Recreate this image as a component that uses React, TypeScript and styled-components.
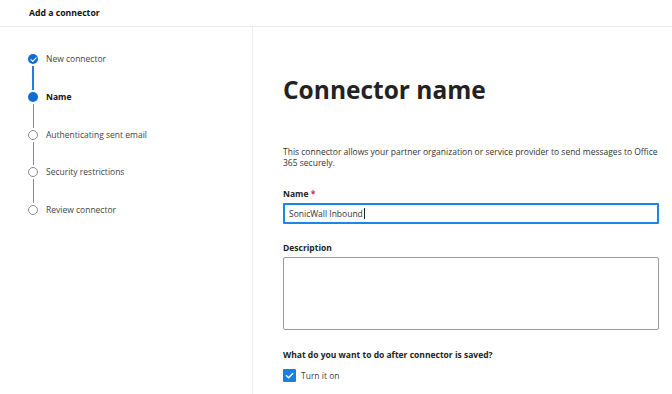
import * as React from 'react';
import styled, { createGlobalStyle } from 'styled-components';

const GlobalStyle = createGlobalStyle`
  html, body { margin:0; padding:0; background:#ffffff; }
  body { font-family: "Open Sans", "Noto Sans", sans-serif; color:#222; }
`;

const Page = styled.div`
  width:672px; height:394px;
  display:flex; flex-direction:column;
  overflow:hidden;
`;

const TopBar = styled.header`
  height:26px;
  flex-shrink:0;
  border-bottom:1px solid #ebebeb;
  padding-left:29px;
  display:flex; align-items:center;
  font-size:8.7px; font-weight:700; color:#111;
`;

const Body = styled.div`
  flex:1;
  display:flex;
`;

const Sidebar = styled.nav`
  width:253px;
  flex-shrink:0;
  border-right:1px solid #ededed;
  padding:27px 0 0 28px;
  box-sizing:border-box;
`;

const StepRow = styled.div`
  display:flex;
  height:37.8px;
  gap:8px;
  &:last-child { height:12px; }
`;

const Marker = styled.div`
  width:10px;
  display:flex; flex-direction:column; align-items:center;
`;

const Dot = styled.div<{ state: 'done' | 'current' | 'todo' }>`
  width:10px; height:10px;
  box-sizing:border-box;
  border-radius:50%;
  flex-shrink:0;
  display:flex; align-items:center; justify-content:center;
  background:${(p) => (p.state === 'todo' ? '#fff' : '#0f6cd4')};
  border:${(p) => (p.state === 'todo' ? '1px solid #8a8a8a' : 'none')};
`;

const Line = styled.div<{ active?: boolean }>`
  width:${(p) => (p.active ? '2px' : '1px')};
  flex:1;
  margin:2px 0;
  background:${(p) => (p.active ? '#1a7fe0' : '#8a8a8a')};
`;

const StepLabel = styled.span<{ current?: boolean }>`
  font-size:8.5px;
  line-height:10px;
  color:${(p) => (p.current ? '#111' : '#444')};
  font-weight:${(p) => (p.current ? 700 : 400)};
`;

const Main = styled.main`
  flex:1;
  padding:48px 13px 0 30px;
  box-sizing:border-box;
`;

const Title = styled.h1`
  margin:0;
  font-size:24.5px;
  line-height:30px;
  font-weight:700;
  color:#222;
`;

const Intro = styled.p`
  margin:41px 0 0 0;
  font-size:8.5px;
  line-height:11px;
  color:#333;
`;

const FieldLabel = styled.div<{ gap: number }>`
  margin-top:${(p) => p.gap}px;
  font-size:8.5px;
  font-weight:700;
  color:#222;
  line-height:12px;
  span { color:#c4314b; }
`;

const TextBox = styled.div`
  margin-top:3px;
  height:21px;
  box-sizing:border-box;
  border:2px solid #1a86e8;
  border-radius:1px;
  padding-left:4px;
  display:flex; align-items:center;
  font-size:8.5px;
  color:#333;
  &::after {
    content:'';
    width:1px; height:11px;
    background:#222;
    margin-left:1px;
  }
`;

const TextArea = styled.div`
  margin-top:3px;
  height:73px;
  box-sizing:border-box;
  border:1px solid #9b9b9b;
  border-radius:2px;
`;

const Question = styled.div`
  margin-top:19px;
  font-size:8.5px;
  font-weight:700;
  color:#222;
  line-height:12px;
`;

const CheckRow = styled.label`
  margin-top:8px;
  display:flex; align-items:center; gap:5px;
  font-size:8.5px;
  color:#444;
`;

const CheckBox = styled.span`
  width:13px; height:13px;
  border-radius:1px;
  background:#1a7fe0;
  display:flex; align-items:center; justify-content:center;
`;

const Check = ({ size }: { size: number }) => (
  <svg width={size} height={size} viewBox="0 0 10 10">
    <path d="M2.2 5.2 L4.2 7.1 L7.9 3.2" fill="none" stroke="#fff" strokeWidth="1.3" strokeLinecap="round" strokeLinejoin="round" />
  </svg>
);

const steps: { title: string; state: 'done' | 'current' | 'todo' }[] = [
  { title: 'New connector', state: 'done' },
  { title: 'Name', state: 'current' },
  { title: 'Authenticating sent email', state: 'todo' },
  { title: 'Security restrictions', state: 'todo' },
  { title: 'Review connector', state: 'todo' },
];

const App = () => {
  return (
    <Page>
      <GlobalStyle />
      <TopBar>Add a connector</TopBar>
      <Body>
        <Sidebar>
          {steps.map((item, i) => (
            <StepRow key={item.title}>
              <Marker>
                <Dot state={item.state}>{item.state === 'done' && <Check size={9} />}</Dot>
                {i < steps.length - 1 && <Line active={item.state === 'done'} />}
              </Marker>
              <StepLabel current={item.state === 'current'}>{item.title}</StepLabel>
            </StepRow>
          ))}
        </Sidebar>
        <Main>
          <Title>Connector name</Title>
          <Intro>
            This connector allows your partner organization or service provider to send messages to Office
            365 securely.
          </Intro>
          <FieldLabel gap={19.5}>Name <span>*</span></FieldLabel>
          <TextBox>SonicWall Inbound</TextBox>
          <FieldLabel gap={18}>Description</FieldLabel>
          <TextArea />
          <Question>What do you want to do after connector is saved?</Question>
          <CheckRow>
            <CheckBox><Check size={11} /></CheckBox>
            Turn it on
          </CheckRow>
        </Main>
      </Body>
    </Page>
  );
};

export default App;
